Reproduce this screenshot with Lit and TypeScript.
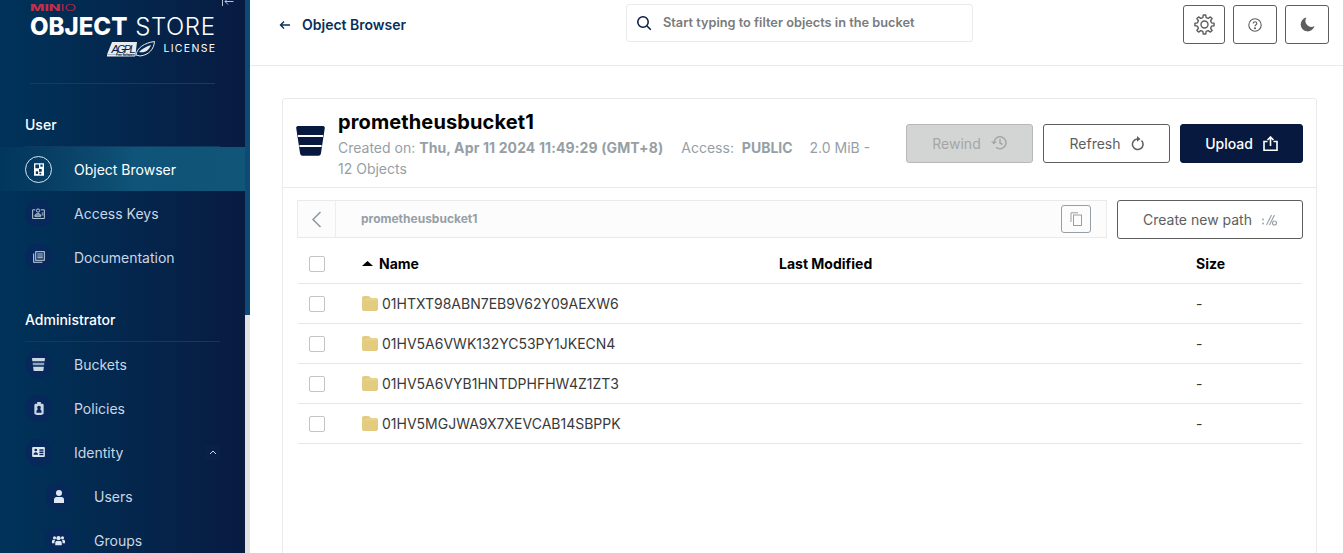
import { LitElement, html, css } from "lit";
import { customElement } from "lit/decorators.js";

const gearPath = (() => {
  const teeth = 8;
  const cx = 12, cy = 12, ro = 11, ri = 8.2;
  const pts: string[] = [];
  for (let i = 0; i < teeth; i++) {
    const a = (i * 2 * Math.PI) / teeth;
    const w = (2 * Math.PI) / teeth;
    const list: [number, number][] = [
      [ri, a - w * 0.3],
      [ro, a - w * 0.16],
      [ro, a + w * 0.16],
      [ri, a + w * 0.3],
    ];
    for (const [r, t] of list) pts.push(`${(cx + r * Math.sin(t)).toFixed(2)} ${(cy - r * Math.cos(t)).toFixed(2)}`);
  }
  return "M" + pts.join("L") + "Z";
})();

const icons: Record<string, unknown> = {
  object: html`<svg viewBox="0 0 11 14" width="10" height="13"><path fill-rule="evenodd" fill="#fff" d="M0 0h11v14H0zM1.500 1.500v4h4v-4zM7 1.500v2.500h2.500V1.500zM5.500 6.500v3h3v-3zM2 9v3h2.500V9zM6 10.500v2h2v-2z"/></svg>`,
  keys: html`<svg viewBox="0 0 14 12" width="13" height="11" fill="none" stroke="#c9d6e4" stroke-width="1"><path d="M3.500 2H.6v9.400h12.800V2H9.500"/><circle cx="6.500" cy="2.800" r="1.800"/><path d="M3 9c0-1.800 1.500-2.800 3.500-2.800S9.500 7.200 9.500 9z" fill="#c9d6e4" fill-opacity=".5"/><path d="M10.500 5.500h2M10.500 7.500h2"/></svg>`,
  docs: html`<svg viewBox="0 0 14 14" width="12" height="12" fill="none" stroke="#c9d6e4" stroke-width="1.200"><path d="M.8 3v10.200H11"/><rect x="3.200" y=".8" width="10" height="10"/><path d="M5 3.500h6.500M5 5.800h6.500M5 8h6.500"/></svg>`,
  buckets: html`<svg viewBox="0 0 14 14" width="13" height="13"><path fill="#c9d6e4" d="M.5 0h13c.3 0 .5.200.5.500l-.4 3.100H.4L0 .5C0 .2.200 0 .5 0z"/><path fill="#8ea3ba" d="M.7 5.200h12.600l-.3 2.600H1z"/><path fill="#c9d6e4" d="M1.200 9.500h11.600l-.5 4c0 .3-.3.500-.6.500H2.300c-.3 0-.6-.2-.6-.5z"/></svg>`,
  policies: html`<svg viewBox="0 0 10 14" width="10" height="13"><path fill="#c9d6e4" fill-rule="evenodd" d="M3 0h4v2h1.500c.8 0 1.500.7 1.500 1.500V12c0 .6-.3 1-.8 1.300L7.500 14h-5L.8 13.300C.3 13 0 12.600 0 12V3.500C0 2.700.7 2 1.500 2H3zM5 4a2 2 0 0 0-2 2c0 .8.400 1.400 1 1.800C2.800 8.200 2.200 9 2.200 11.500h5.600C7.800 9 7.200 8.200 6 7.800 6.600 7.400 7 6.800 7 6a2 2 0 0 0-2-2z"/></svg>`,
  identity: html`<svg viewBox="0 0 14 11" width="13" height="10"><path fill="#dfe7f0" fill-rule="evenodd" d="M1 0h12c.6 0 1 .4 1 1v9c0 .6-.4 1-1 1H1c-.6 0-1-.4-1-1V1c0-.6.400-1 1-1zM4 1.800a1.500 1.500 0 1 0 0 3 1.500 1.500 0 0 0 0-3zM1.500 8.500h5c0-1.700-1-2.800-2.500-2.800S1.500 6.800 1.500 8.500zM8 2.500v1.500h4.500V2.500zM8 5v1.500h4.500V5zM8 7.500V9h4.500V7.500z"/></svg>`,
  users: html`<svg viewBox="0 0 10 13" width="10" height="13"><circle cx="5" cy="3" r="3" fill="#dfe7f0"/><path fill="#dfe7f0" d="M0 13V9.500C0 8 1.200 7 2.500 7h5C8.800 7 10 8 10 9.500V13z"/></svg>`,
  groups: html`<svg viewBox="0 0 14 11" width="13" height="11" fill="#dfe7f0"><circle cx="7" cy="3" r="2.300"/><circle cx="2.700" cy="2.500" r="1.700"/><circle cx="11.300" cy="2.500" r="1.700"/><path d="M3.500 10.500V8c0-1.300 1-2 2-2h3c1 0 2 .7 2 2v2.500zM0 8.500V6.300c0-1 .7-1.600 1.700-1.600h2C3 5.300 2.600 6.200 2.600 7.200v1.300zM14 8.500V6.300c0-1-.7-1.600-1.700-1.600h-2c.7.600 1.100 1.500 1.100 2.500v1.300z"/></svg>`,
};

const folder = html`<svg class="folder" viewBox="0 0 16 15" width="16" height="15"><path fill="#e3cc80" d="M2 0h4c.8 0 1.300.3 1.800.8L9 2h5c1.100 0 2 .9 2 2v9c0 1.100-.9 2-2 2H2c-1.100 0-2-.9-2-2V2C0 .9.900 0 2 0z"/><path fill="#ecd996" d="M0 4.500h16V4c0-1.100-.9-2-2-2H5L3 3.500H0z" opacity=".5"/></svg>`;

const rows = [
  "01HTXT98ABN7EB9V62Y09AEXW6",
  "01HV5A6VWK132YC53PY1JKECN4",
  "01HV5A6VYB1HNTDPHFHW4Z1ZT3",
  "01HV5MGJWA9X7XEVCAB14SBPPK",
];

@customElement("app-root")
export class AppRoot extends LitElement {
  static styles = css`
    :host { display: block; height: 100vh; overflow: hidden; font-family: Inter, "Noto Sans", sans-serif; background: #fff; color: #000; }
    * { box-sizing: border-box; }
    .page { display: flex; height: 553px; }
    .side { position: relative; flex: 0 0 245px; height: 553px; overflow: hidden; background: linear-gradient(90deg, #00335a 0%, #081b41 100%); color: #fff; }
    .collapse { position: absolute; left: 221px; top: -3px; }
    .logo { padding: 3px 30px 0; height: 83px; display: flex; flex-direction: column; align-items: stretch; }
    .minio { font-size: 9px; line-height: 9px; color: #c72c48; font-weight: 800; height: 9px; transform: scaleX(1.700); transform-origin: left; }
    .minio span { font-weight: 300; }
    .os { font-size: 24px; line-height: 22px; margin-top: 4px; white-space: nowrap; height: 22px; display: flex; justify-content: space-between; }
    .os b { font-weight: 800; }
    .os span { font-weight: 300; letter-spacing: 0.600px; margin-right: -0.600px; }
    .lic { display: flex; justify-content: flex-end; align-items: center; gap: 8px; margin-top: 2px; height: 17px; }
    .lic span { font-size: 10.500px; letter-spacing: 1.300px; font-weight: 400; margin-right: -1.300px; }
    .hr { height: 1px; background: #123c63; margin: 0 30px; }
    .sec { margin: 29px 25px 0; font-size: 14px; line-height: 17px; font-weight: 500; height: 34px; padding-top: 3px; border-bottom: 1px solid #113a60; color: #fff; }
    .sec.admin { margin-top: 0; height: 63px; padding-top: 32px; }
    .item { display: flex; align-items: center; height: 44px; padding-left: 25px; font-size: 14px; color: #c9d6e4; gap: 22px; position: relative; }
    .item.sub { padding-left: 45px; }
    .item.on { background: linear-gradient(90deg, rgba(15, 84, 121, 0.1) 0%, #0f5479 55%, #115678 100%); color: #fff; }
    .dot { width: 27px; height: 27px; border-radius: 50%; background: #07285a; display: flex; align-items: center; justify-content: center; flex: none; }
    .item.on .dot { background: transparent; border: 1px solid #dbe4ec; }
    .chev { position: absolute; left: 205px; top: 15px; width: 15px; height: 15px; background: #0a2147; display: flex; align-items: center; justify-content: center; }
    .scroll { flex: 0 0 5px; background: linear-gradient(#0f4a76 0 315px, #e2e2e2 315px); }
    .main { flex: 1; min-width: 0; display: flex; flex-direction: column; }
    .top { height: 66px; flex: none; border-bottom: 1px solid #eaeaea; display: flex; align-items: flex-start; }
    .back { display: flex; align-items: center; gap: 11px; margin: 18px 0 0 29px; width: 347px; font-size: 14px; font-weight: 600; color: #07305a; line-height: 14px; }
    .search { width: 347px; height: 38px; margin-top: 4px; border: 1px solid #eaeaea; border-radius: 3px; display: flex; align-items: center; gap: 11px; padding: 0 0 1px 9px; font-size: 12.750px; font-weight: 600; color: #7b7b7b; }
    .tools { display: flex; gap: 8px; margin: 5px 0 0 210px; }
    .tool { height: 39px; width: 44px; border: 1px solid #5e5e5e; border-radius: 3px; display: flex; align-items: center; justify-content: center; }
    .tool.s { width: 42px; }
    .content { padding: 32px 26px 0 32px; flex: 1; display: flex; flex-direction: column; min-height: 0; }
    .head { height: 90px; border: 1px solid #eaeaea; border-radius: 3px 3px 0 0; display: flex; align-items: flex-start; padding: 0 13px; flex: none; }
    .bk { margin-top: 27px; flex: none; }
    .info { margin-left: 13px; width: 540px; margin-top: 10px; }
    .title { font-size: 20px; font-weight: 700; line-height: 26px; letter-spacing: 0.120px; }
    .meta { font-size: 14px; line-height: 21px; color: #969fa6; margin-top: 2px; }
    .meta b { font-weight: 700; margin-right: 14px; }
    .meta b.d { letter-spacing: 0.120px; }
    .meta b.p { margin-right: 13px; }
    .acts { display: flex; gap: 10px; margin-left: auto; margin-top: 25px; }
    .btn { height: 39px; width: 127px; border: 1px solid #5e5e5e; border-radius: 3px; display: flex; align-items: center; justify-content: center; gap: 10px; font-size: 14px; color: #5e5e5e; background: #fff; }
    .btn.dis { background: #d3d5d5; border-color: #b8b8b8; color: #a5a5a5; }
    .btn.dis svg { margin-bottom: 3px; }
    .btn.pri { width: 123px; background: #07193e; border-color: #07193e; color: #fff; font-weight: 500; }
    .panel { flex: 1; border: 1px solid #eaeaea; border-width: 0 1px; padding: 12px 13px 0 14px; min-height: 0; }
    .crumbrow { display: flex; justify-content: space-between; height: 39px; }
    .crumb { width: 810px; height: 38px; padding-bottom: 1px; background: #fcfcfc; border: 1px solid #eaeaea; display: flex; align-items: center; font-size: 12px; font-weight: 700; color: #969fa6; position: relative; }
    .cb { width: 38px; height: 36px; margin-bottom: -1px; border-right: 1px solid #eeeeee; display: flex; align-items: center; justify-content: center; margin-right: 25px; flex: none; }
    .copy { position: absolute; right: 15px; top: 4px; width: 30px; height: 28px; border: 1px solid #969fa6; border-radius: 3px; display: flex; align-items: center; justify-content: center; background: #fcfcfc; }
    .newp { width: 186px; height: 39px; }
    .table { margin: 5px 1px 0 1px; }
    .r { display: grid; grid-template-columns: 64px 417px 417px 1fr; height: 40px; align-items: center; border-bottom: 1px solid #e7e7e7; font-size: 14px; color: #393939; }
    .r.h { font-weight: 700; color: #000; }
    .cbx { width: 16px; height: 16px; border: 1px solid #c4c4c4; border-radius: 2px; margin-left: 11px; background: #fff; }
    .nm { display: flex; align-items: center; gap: 4px; }
    .h .nm { gap: 6px; }
    .folder { flex: none; }
  `;

  item(icon: string, label: string, cls = "", extra: unknown = "") {
    return html`<div class="item ${cls}"><div class="dot">${icons[icon]}</div><span>${label}</span>${extra}</div>`;
  }

  render() {
    return html`<div class="page">
      <aside class="side">
        <svg class="collapse" width="14" height="10" viewBox="0 0 14 10" fill="none" stroke="#b8c4d2" stroke-width="1"><path d="M1.500 0v9M12.500 4.500H4M7 1.500 4 4.500l3 3"/></svg>
        <div class="logo">
          <div class="minio">MIN<span>IO</span></div>
          <div class="os"><b>OBJECT</b><span>STORE</span></div>
          <div class="lic">
            <svg width="48" height="16" viewBox="0 0 48 16"><path d="M5 1h25l-1.500 12.500H0z" fill="#e8ebf0"/><path d="M0 13.500h29L28 15.500H0z" fill="#e8ebf0"/><text x="4.500" y="11.500" font-family="Liberation Sans, sans-serif" font-size="11" font-style="italic" font-weight="400" fill="#07193e" textLength="24">AGPL</text><text x="9" y="15.300" font-family="Liberation Sans, sans-serif" font-size="2.800" font-weight="700" fill="#07193e">Free Software</text><path d="M29 14C30 7 37 2 47.500 .5 47 8 42 14 33 15z" fill="none" stroke="#e8ebf0" stroke-width="1"/><path d="M32 11c3-3 7-5.500 12-7-2 5-6 8.500-12 7z" fill="#e8ebf0"/></svg>
            <span>LICENSE</span>
          </div>
        </div>
        <div class="hr"></div>
        <div class="sec">User</div>
        ${this.item("object", "Object Browser", "on")}
        ${this.item("keys", "Access Keys")}
        ${this.item("docs", "Documentation")}
        <div class="sec admin">Administrator</div>
        ${this.item("buckets", "Buckets")}
        ${this.item("policies", "Policies")}
        ${this.item("identity", "Identity", "", html`<div class="chev"><svg width="8" height="5" viewBox="0 0 8 5" fill="none" stroke="#c9d6e4"><path d="M1 4 4 1l3 3"/></svg></div>`)}
        ${this.item("users", "Users", "sub")}
        ${this.item("groups", "Groups", "sub")}
      </aside>
      <div class="scroll"></div>
      <main class="main">
        <header class="top">
          <div class="back"><svg width="12" height="10" viewBox="0 0 12 10" fill="none" stroke="#07305a" stroke-width="1.400"><path d="M11 5H1.500M5 1.500 1.500 5 5 8.500"/></svg><span>Object Browser</span></div>
          <div class="search"><svg width="16" height="16" viewBox="0 0 16 16" fill="none" stroke="#07193e" stroke-width="1.500"><circle cx="7" cy="7" r="5.200"/><path d="M11 11l3.800 3.800"/></svg><span>Start typing to filter objects in the bucket</span></div>
          <div class="tools">
            <div class="tool s"><svg width="21" height="21" viewBox="0 0 24 24" fill="none" stroke="#5e5e5e" stroke-width="1.600" stroke-linejoin="round"><path d="${gearPath}"/><circle cx="12" cy="12" r="4"/></svg></div>
            <div class="tool"><svg width="14" height="14" viewBox="0 0 14 14" fill="none" stroke="#5e5e5e" stroke-width="1.100"><circle cx="7" cy="7" r="6.200"/><path d="M5.200 5.500C5.200 4.400 6 3.800 7 3.800s1.800.7 1.800 1.600c0 1.300-1.800 1.400-1.800 2.900"/><circle cx="7" cy="10.200" r=".5" fill="#5e5e5e"/></svg></div>
            <div class="tool"><svg width="15" height="15" viewBox="0 0 15 15"><path fill="#5e5e5e" d="M6.500.5A7 7 0 1 0 14.500 9 6 6 0 0 1 6.500.5z"/></svg></div>
          </div>
        </header>
        <div class="content">
          <section class="head">
            <svg class="bk" width="29" height="30" viewBox="0 0 29 30"><path fill="#07193e" d="M2 0h25c1.200 0 2 1 1.800 2L25 27c-.2 1.500-1 2.700-2.500 2.700h-16C5 29.700 4.200 28.500 4 27L.2 2C0 1 .8 0 2 0z"/><path d="M2 10h25M3.400 20h22.200" stroke="#fff" stroke-width="1.800"/></svg>
            <div class="info">
              <div class="title">prometheusbucket1</div>
              <div class="meta"><span>Created on:</span> <b class="d">Thu, Apr 11 2024 11:49:29 (GMT+8)</b> <span>Access: &nbsp;</span><b class="p">PUBLIC</b> <span>2.0 MiB -</span> <span>12 Objects</span></div>
            </div>
            <div class="acts">
              <div class="btn dis">Rewind <svg width="16" height="15" viewBox="0 0 16 15" fill="none" stroke="#a5a5a5" stroke-width="1.500"><path d="M3 7.500a6 6 0 1 1 2 4.800"/><path d="M9 4v4l2.500 1.500"/><path d="M0 6.500l3 3 3-3" fill="#a5a5a5" stroke="none"/></svg></div>
              <div class="btn">Refresh <svg width="13" height="15" viewBox="0 0 13 15" fill="none" stroke="#5e5e5e" stroke-width="1.500"><path d="M10.500 4.500A5.300 5.300 0 1 1 6 3"/><path d="M6 0l3.500 3L6 5.800z" fill="#5e5e5e" stroke="none"/></svg></div>
              <div class="btn pri">Upload <svg width="15" height="15" viewBox="0 0 15 15" fill="none" stroke="#fff" stroke-width="1.600"><path d="M4.500 5.500H1v8.700h13V5.500h-3.500M7.500 10V1.500M4.500 4l3-3 3 3"/></svg></div>
            </div>
          </section>
          <section class="panel">
            <div class="crumbrow">
              <div class="crumb">
                <div class="cb"><svg width="11" height="17" viewBox="0 0 11 17" fill="none" stroke="#8a96a0" stroke-width="1.500"><path d="M9.500 1 2 8.500 9.500 16"/></svg></div>
                prometheusbucket1
                <div class="copy"><svg width="12" height="14" viewBox="0 0 12 14" fill="none" stroke="#969fa6"><path d="M1 10V.8h7"/><rect x="3.500" y="3" width="8" height="10.500"/></svg></div>
              </div>
              <div class="btn newp">Create new path <svg width="15" height="12" viewBox="0 0 15 12" fill="none" stroke="#969fa6" stroke-width="1.100"><path d="M4.500 11 9.500 1M7.500 11l5-10"/><circle cx="1" cy="5.500" r=".9" fill="#969fa6" stroke="none"/><circle cx="1" cy="9.500" r=".9" fill="#969fa6" stroke="none"/><circle cx="12.500" cy="9" r="2"/></svg></div>
            </div>
            <div class="table">
              <div class="r h"><div class="cbx"></div><div class="nm"><svg width="11" height="5" viewBox="0 0 11 5"><path d="M0 5 5.500 0 11 5z" fill="#000"/></svg><span>Name</span></div><div>Last Modified</div><div>Size</div></div>
              ${rows.map((n) => html`<div class="r"><div class="cbx"></div><div class="nm">${folder}<span>${n}</span></div><div></div><div>-</div></div>`)}
            </div>
          </section>
        </div>
      </main>
    </div>`;
  }
}
